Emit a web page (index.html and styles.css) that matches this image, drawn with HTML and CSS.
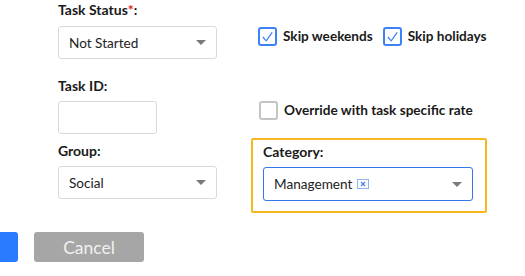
FILE: index.html
```html
<!DOCTYPE html>
<html>
<head>
  <meta charset="utf-8" />
  <title>Task details</title>
  <link rel="stylesheet" href="styles.css">
</head>
<body>
  <form class="task-form">
    <div class="col col-left">
      <div class="field">
        <label class="field-label">Task Status<span class="req">*</span>:</label>
        <div class="select">
          <span class="select-value">Not Started</span>
          <span class="caret"></span>
        </div>
      </div>
      <div class="field field-id">
        <label class="field-label">Task ID:</label>
        <div class="input"></div>
      </div>
      <div class="field field-group">
        <label class="field-label">Group:</label>
        <div class="select">
          <span class="select-value">Social</span>
          <span class="caret"></span>
        </div>
      </div>
    </div>

    <div class="col col-right">
      <div class="check-row">
        <label class="check">
          <span class="box checked">
            <svg viewBox="0 0 19 19" width="19" height="19"><path d="M4.8 10 L8.2 13.8 L14.2 5.4" fill="none" stroke="#3b82f6" stroke-width="1.2"/></svg>
          </span>
          Skip weekends
        </label>
        <label class="check">
          <span class="box checked">
            <svg viewBox="0 0 19 19" width="19" height="19"><path d="M4.8 10 L8.2 13.8 L14.2 5.4" fill="none" stroke="#3b82f6" stroke-width="1.2"/></svg>
          </span>
          Skip holidays
        </label>
      </div>
      <div class="check-row check-override">
        <label class="check">
          <span class="box"></span>
          Override with task specific rate
        </label>
      </div>
      <div class="highlight">
        <label class="field-label">Category:</label>
        <div class="select select-active">
          <span class="select-value">Management</span>
          <span class="tag-x">
            <svg viewBox="0 0 12 10" width="12" height="10"><path d="M4 3 L8 7 M8 3 L4 7" stroke="#3b82f6" stroke-width="1.2"/></svg>
          </span>
          <span class="caret"></span>
        </div>
      </div>
    </div>

    <div class="actions">
      <button type="button" class="btn btn-save" aria-label="Save"></button>
      <button type="button" class="btn btn-cancel">Cancel</button>
    </div>
  </form>
</body>
</html>
```

FILE: styles.css
```css
body {
  margin: 0;
  background: #ffffff;
  font-family: Lato, "Open Sans", sans-serif;
  color: #1e1e1e;
  overflow: hidden;
}
.task-form {
  display: grid;
  grid-template-columns: 159px 236px;
  column-gap: 34px;
  padding-left: 58px;
}
.field-label {
  display: block;
  font-size: 14px;
  font-weight: bold;
  line-height: 20px;
  color: #1a1a1a;
}
.req {
  color: #e02020;
}
.field .field-label {
  margin-bottom: 6px;
}
.field-id {
  margin-top: 17px;
}
.field-id .field-label,
.field-group .field-label {
  margin-bottom: 5px;
}
.field-group {
  margin-top: 7px;
}
.select {
  display: flex;
  align-items: center;
  height: 33px;
  box-sizing: border-box;
  border: 1px solid #d9d9d9;
  border-radius: 3px;
  padding: 0 10px;
  font-size: 13.6px;
  color: #222;
}
.select-value {
  flex: none;
}
.caret {
  margin-left: auto;
  width: 0;
  height: 0;
  border-left: 5px solid transparent;
  border-right: 5px solid transparent;
  border-top: 5px solid #7a7a7a;
}
.input {
  width: 99px;
  height: 33px;
  box-sizing: border-box;
  border: 1px solid #d9d9d9;
  border-radius: 3px;
}
.col-right {
  padding-top: 27px;
}
.check-row {
  display: flex;
  gap: 10px;
  padding-left: 7px;
  white-space: nowrap;
}
.check {
  display: flex;
  align-items: center;
  gap: 6px;
  font-size: 13.6px;
  font-weight: bold;
  line-height: 19px;
  color: #1a1a1a;
}
.box {
  flex: none;
  width: 19px;
  height: 19px;
  box-sizing: border-box;
  border: 2px solid #c4c4c4;
  border-radius: 3px;
  position: relative;
}
.box.checked {
  border-color: #3b82f6;
}
.box svg {
  position: absolute;
  left: -2px;
  top: -2px;
}
.check-override {
  margin-top: 55px;
  padding-left: 8px;
}
.highlight {
  margin-top: 18px;
  border: 2px solid #f6b81e;
  border-radius: 2px;
  padding: 2px 12px 10px 10px;
}
.highlight .field-label {
  margin-bottom: 5px;
}
.select-active {
  height: 34px;
  border-color: #3575ea;
}
.tag-x {
  margin-left: 5px;
  width: 12px;
  height: 10px;
  box-sizing: border-box;
  border: 1px solid #8fb3f3;
  position: relative;
}
.tag-x svg {
  position: absolute;
  left: -1px;
  top: -1px;
}
.actions {
  grid-column: 1 / 3;
  display: flex;
  gap: 16px;
  margin-left: -58px;
  margin-top: 19px;
}
.btn {
  height: 30px;
  border: none;
  border-radius: 3px;
  font-family: Lato, "Open Sans", sans-serif;
  font-size: 17.5px;
  padding: 0;
}
.btn-save {
  width: 100px;
  margin-left: -82px;
  background: #2a7bff;
  color: #ffffff;
}
.btn-cancel {
  width: 110px;
  background: #a6a6a6;
  color: #f0f0f0;
}
```
